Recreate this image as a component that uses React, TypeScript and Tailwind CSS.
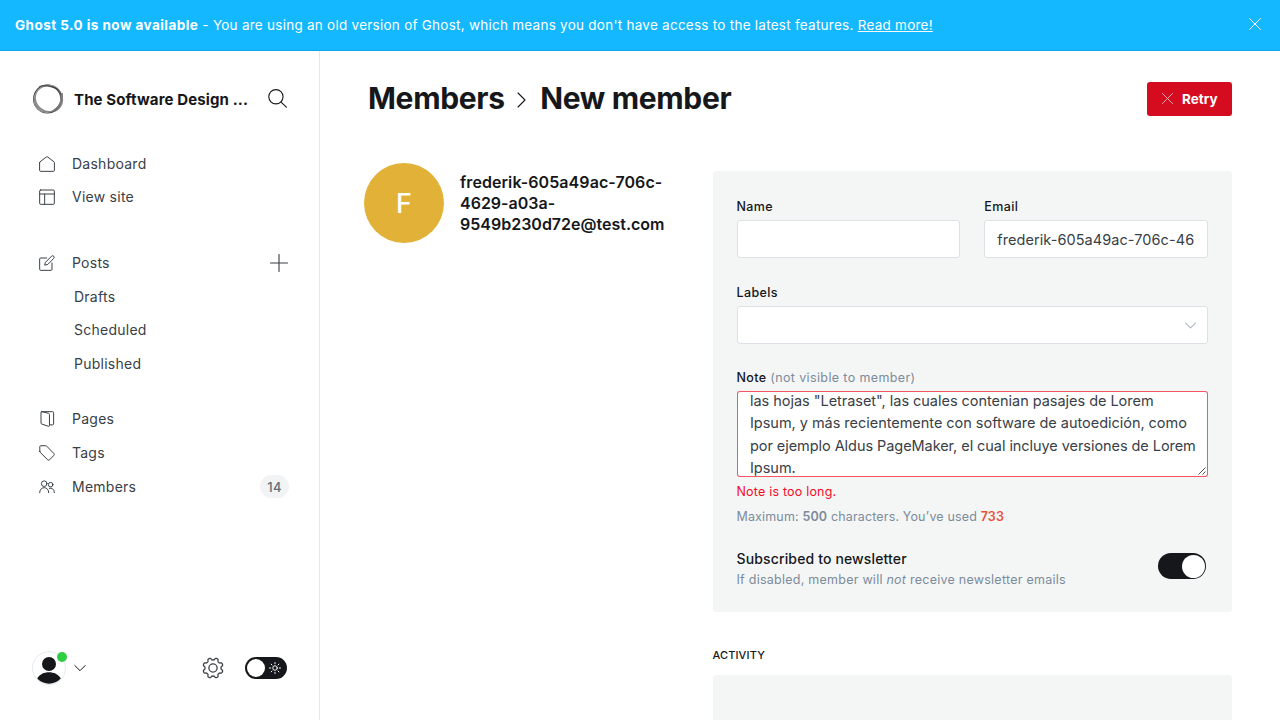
import React from "react";

type IconProps = { className?: string; children: React.ReactNode; box?: string };

function Icon({ className = "", children, box = "0 0 24 24" }: IconProps) {
  return (
    <svg viewBox={box} fill="none" stroke="currentColor" strokeLinecap="round" strokeLinejoin="round" className={"shrink-0 " + className}>
      {children}
    </svg>
  );
}

// Outline of an eight-lobed cog centred on 12,12.
const cogPoints = Array.from({ length: 160 }, (_, i) => {
  const a = (i / 160) * Math.PI * 2;
  const r = 9.9 + 1.25 * Math.tanh(1.8 * Math.cos(8 * a + Math.PI));
  return `${(12 + r * Math.cos(a)).toFixed(2)},${(12 + r * Math.sin(a)).toFixed(2)}`;
}).join(" ");

const icons = {
  home: <path d="M.9 10.2V21.6c0 .8.6 1.4 1.4 1.4h19.4c.8 0 1.4-.6 1.4-1.4V10.2c0-.6-.2-1.1-.6-1.4L13 1.4a1.6 1.6 0 0 0-2 0L1.5 8.800c-.4.3-.6.8-.6 1.4z" />,
  site: (
    <>
      <rect x="1" y="1.500" width="22" height="21.500" rx="1.500" />
      <path d="M1 7.500h22M8.500 7.500v15.500" />
    </>
  ),
  edit: (
    <>
      <path d="M11.500 4.500H2.500A1.500 1.500 0 0 0 1 6v15.500A1.500 1.500 0 0 0 2.500 23H18a1.500 1.500 0 0 0 1.500-1.500V12" />
      <path d="M12.700 14.300 8.500 15.200l1-4.100 9.300-9.300a2.300 2.300 0 0 1 3.300 3.300z" />
    </>
  ),
  pages: (
    <>
      <path d="M3.800 1h.7l9.800 2.500c.8.200 1.400.9 1.400 1.700V22c0 .8-.7 1.200-1.400 1l-10-3.400A1.500 1.500 0 0 1 3 18.200V2.200C3 1.500 3.200 1 3.800 1z" />
      <path d="M4 1h16.500c.8 0 1.400.6 1.400 1.400v17c0 .8-.6 1.400-1.400 1.400h-4.300" />
    </>
  ),
  tag: <path d="M1.200 9.600V2.500c0-.8.6-1.400 1.400-1.400h7.500c.6 0 1.100.2 1.500.6l10.800 11.200c.7.700.7 1.800 0 2.500l-6.700 7c-.7.700-1.700.7-2.400 0L1.800 11.100c-.4-.4-.6-.9-.6-1.500z" />,
  members: (
    <>
      <circle cx="7.800" cy="7" r="4.200" />
      <path d="M1 20.500c0-4.500 3-7.500 6.800-7.500s6.800 3 6.800 7.500" />
      <circle cx="17.500" cy="8.500" r="3.400" />
      <path d="M15.500 14c4-1.200 7.500 1.500 7.500 6.500" />
    </>
  ),
};

function NavItem({ icon, label, height, children }: { icon: React.ReactNode; label: string; height: string; children?: React.ReactNode }) {
  return (
    <li className={"flex items-center pl-[39px] pr-[31px] " + height}>
      <Icon className="mr-[17px] h-4 w-4 stroke-[1.500] text-[#394047]">{icon}</Icon>
      <span className="flex-1">{label}</span>
      {children}
    </li>
  );
}

function Sidebar() {
  return (
    <nav className="flex w-80 shrink-0 flex-col border-r border-[#e6e9eb] text-[#394047]">
      <div className="flex h-24 items-center pl-8 pr-8">
        <svg viewBox="0 0 32 32" className="h-8 w-8 shrink-0" fill="none">
          <ellipse cx="16.300" cy="15.500" rx="14" ry="12.800" stroke="#8b8b8b" strokeWidth="2" transform="rotate(35 16 16)" />
          <ellipse cx="15.300" cy="16" rx="13.600" ry="13.700" stroke="#4c4c4c" strokeWidth="1.400" />
          <ellipse cx="16" cy="15.500" rx="14.300" ry="12.900" stroke="#999" strokeWidth="1" transform="rotate(-50 16 16)" />
          <path d="M7 4C12 1 17 3.500 22 4.500c4 1 7 4 7 8" stroke="#333" strokeWidth=".8" />
          <path d="M30 10c1 7-2 14-9 18" stroke="#777" strokeWidth="1.500" />
        </svg>
        <h1 className="relative top-px ml-[10px] flex-1 whitespace-nowrap text-[15px] leading-6 font-bold tracking-[0.120px] text-[#15171a]">The Software Design ...</h1>
        <Icon className="-mt-[2px] h-[19px] w-[19px] stroke-[1.400] text-[#15171a]">
          <circle cx="10" cy="9.800" r="9" />
          <path d="m16.500 16.500 6.700 6.500" />
        </Icon>
      </div>
      <ul className="text-[14px] leading-5 tracking-[0.250px]">
        <NavItem icon={icons.home} label="Dashboard" height="h-[33px]" />
        <NavItem icon={icons.site} label="View site" height="h-[34px]" />
        <li className="h-8" />
        <NavItem icon={icons.edit} label="Posts" height="h-[34px]">
          <Icon className="-mt-px h-[18px] w-[18px] stroke-[1.500]"><path d="M12 .7v22.600M.7 12h22.600" /></Icon>
        </NavItem>
        <li className="flex h-[33px] items-center pl-[74px]">Drafts</li>
        <li className="flex h-[34px] items-center pl-[74px]">Scheduled</li>
        <li className="flex h-[34px] items-center pl-[74px]">Published</li>
        <li className="h-[21px]" />
        <NavItem icon={icons.pages} label="Pages" height="h-[34px]" />
        <NavItem icon={icons.tag} label="Tags" height="h-[34px]" />
        <NavItem icon={icons.members} label="Members" height="h-[34px]">
          <span className="-mt-px -mr-[1px] flex h-[23px] w-[29px] items-center justify-center rounded-full bg-[#f1f3f4] text-[13px] font-medium text-[#626d79]">14</span>
        </NavItem>
      </ul>
      <div className="mt-auto flex h-[104px] items-center pl-8 pr-8">
        <svg viewBox="0 0 36 36" className="h-9 w-9 shrink-0">
          <circle cx="17" cy="18.200" r="16.500" fill="#fff" stroke="#e6e9eb" />
          <circle cx="17" cy="14" r="7" fill="#15171a" />
          <path d="M5.200 28.500c4.500-8.200 19.100-8.200 23.600 0a16 16 0 0 1-23.600 0z" fill="#15171a" />
          <circle cx="30" cy="7" r="5" fill="#30cf43" />
        </svg>
        <Icon className="ml-[6px] h-3 w-3 stroke-[1] text-[#15171a]" box="0 0 12 12"><path d="m.8 3.500 5.200 5.200 5.200-5.200" /></Icon>
        <Icon className="ml-auto h-[22px] w-[22px] stroke-[1.400] text-[#394047]">
          <polygon points={cogPoints} />
          <circle cx="12" cy="12" r="4.500" />
        </Icon>
        <span className="ml-[21px] flex h-[22px] w-[42px] items-center justify-between rounded-full bg-[#15171a] pl-[2px] pr-[6px] text-white">
          <span className="h-[18px] w-[18px] rounded-full bg-white" />
          <Icon className="h-3 w-3 stroke-[1.900]">
            <circle cx="12" cy="12" r="4.500" />
            <path d="M12 1v2.500M12 20.500V23M1 12h2.500M20.500 12H23M4.200 4.200 6 6M18 18l1.800 1.800M4.200 19.800 6 18M18 6l1.800-1.800" />
          </Icon>
        </span>
      </div>
    </nav>
  );
}

const label = "text-[12.500px] leading-5 font-medium tracking-[0.380px] text-[#15171a]";
const field = "flex h-[38px] items-center overflow-hidden rounded-[3px] border border-[#dde1e5] bg-white px-3";

function MemberForm() {
  return (
    <section className="h-[441px] rounded-[3px] bg-[#f4f6f6] px-6 pt-[26px]">
      <div className="grid grid-cols-2 gap-6">
        <div>
          <div className={label}>Name</div>
          <div className={"mt-[3px] " + field} />
        </div>
        <div>
          <div className={label}>Email</div>
          <div className={"mt-[3px] " + field}>
            <span className="mt-px overflow-hidden whitespace-nowrap text-[14.500px] leading-[23px] tracking-[0.070px] text-[#394047]">frederik-605a49ac-706c-46</span>
          </div>
        </div>
      </div>
      <div className="mt-[25px]">
        <div className={label}>Labels</div>
        <div className={"mt-[3px] justify-end " + field}>
          <Icon className="h-[11px] w-[11px] stroke-[1.200] text-[#aeb7c1] -mr-[1px]" box="0 0 12 12"><path d="m.6 3.300 5.400 5.400 5.400-5.400" /></Icon>
        </div>
      </div>
      <div className="mt-[24px]">
        <div className={label}>Note <span className="font-normal text-[#7c8b9a]">(not visible to member)</span></div>
        <div className="relative mt-[3px] flex h-[86px] flex-col justify-end overflow-hidden rounded-[3px] border border-[#f50b23]/70 bg-white pl-[12.500px] whitespace-nowrap text-[14.500px] leading-[22.500px] tracking-[-0.030px] text-[#394047]">
          <div className="-mb-[3.800px]">
            <p>las hojas "Letraset", las cuales contenian pasajes de Lorem</p>
            <p>Ipsum, y más recientemente con software de autoedición, como</p>
            <p className="tracking-[-0.060px]">por ejemplo Aldus PageMaker, el cual incluye versiones de Lorem</p>
            <p>Ipsum.</p>
          </div>
          <svg viewBox="0 0 8 8" className="absolute right-[1px] bottom-[1px] h-2 w-2" stroke="#555"><path d="M.5 7.500l7-7M4.500 7.500l3-3" /></svg>
        </div>
        <p className="mt-[5px] text-[12.500px] leading-5 tracking-[0.200px] text-[#f50b23]">Note is too long.</p>
        <p className="mt-[5px] text-[12.500px] leading-5 tracking-[0.150px] text-[#7c8b9a]">Maximum: <b className="font-semibold">500</b> characters. You’ve used <b className="font-semibold text-[#e7513b]">733</b></p>
      </div>
      <div className="mt-[22px] flex items-start justify-between">
        <div>
          <h4 className="text-[14px] leading-5 font-medium tracking-[0.140px] text-[#15171a]">Subscribed to newsletter</h4>
          <p className="mt-px text-[12.500px] leading-5 tracking-[0.250px] text-[#7c8b9a]">If disabled, member will <em>not</em> receive newsletter emails</p>
        </div>
        <span className="mt-[4px] mr-[2px] flex h-[26px] w-12 items-center justify-end rounded-full bg-[#15171a] pr-[1px]">
          <span className="h-[23px] w-[23px] rounded-full bg-white" />
        </span>
      </div>
    </section>
  );
}

export default function App() {
  return (
    <div className="flex h-[720px] w-[1280px] flex-col overflow-hidden bg-white font-['Inter',sans-serif]">
      <header className="flex h-[51px] shrink-0 items-center justify-between border-b border-[#10a4e8] bg-[#14b8ff] pl-[15px] pr-[19px] text-white">
        <p className="text-[13.500px] leading-5 tracking-[0.255px]"><b className="font-bold tracking-[0.450px]">Ghost 5.0 is now available</b> - You are using an old version of Ghost, which means you don't have access to the latest features. <a className="underline">Read more!</a></p>
        <Icon className="-mt-[2px] h-3 w-3 stroke-1" box="0 0 12 12"><path d="m.5.5 11 11m0-11-11 11" /></Icon>
      </header>
      <div className="flex min-h-0 flex-1">
        <Sidebar />
        <main className="min-w-0 flex-1 overflow-hidden pl-12 pr-12">
          <div className="flex h-[95px] items-center justify-between">
            <h2 className="-mt-[2px] flex items-center text-[30px] leading-9 font-bold tracking-[-0.340px] text-[#15171a]">
              Members
              <Icon className="mr-[12.500px] ml-[11px] mt-1 h-4 w-3 stroke-[1.100]" box="0 0 12 16"><path d="m2 1 7 7-7 7" /></Icon>
              New member
            </h2>
            <button className="flex h-[34px] w-[85px] items-center rounded-[3px] bg-[#d50b20] pl-[15px] text-[13.500px] font-bold text-white">
              <Icon className="mr-[9px] h-[11px] w-[11px] stroke-[.9] opacity-80" box="0 0 12 12"><path d="m.5.5 11 11m0-11-11 11" /></Icon>
              <span className="pt-px">Retry</span>
            </button>
          </div>
          <div className="flex items-start">
            <div className="mt-[17px] -ml-1 flex w-[348.500px] items-center">
              <div className="flex h-20 w-20 shrink-0 items-center justify-center rounded-full bg-[#e1b237] pt-[3px] text-[27px] font-medium text-white">F</div>
              <h3 className="ml-4 text-[16px] leading-[21px] font-semibold text-[#15171a]"><span className="tracking-[0.080px]">frederik-605a49ac-706c-</span><br />4629-a03a-<br />9549b230d72e@test.com</h3>
            </div>
            <div className="min-w-0 flex-1 pt-[25px]">
              <MemberForm />
              <h4 className="mt-[33px] text-[11px] leading-5 font-medium tracking-[0.120px] text-[#15171a]">ACTIVITY</h4>
              <div className="mt-[10px] h-20 rounded-[3px] bg-[#f4f6f6]" />
            </div>
          </div>
        </main>
      </div>
    </div>
  );
}
